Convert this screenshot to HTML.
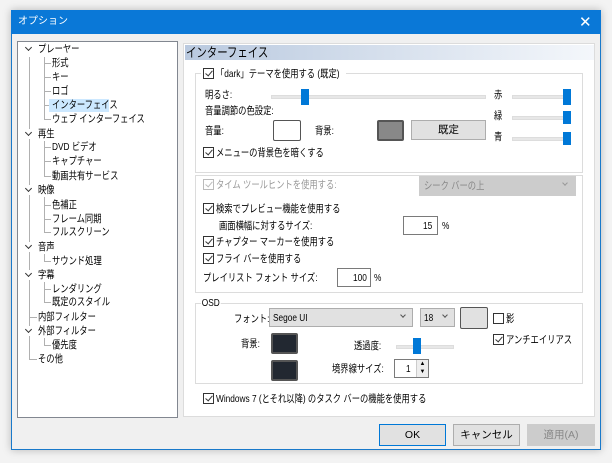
<!DOCTYPE html>
<html><head><meta charset="utf-8"><style>
*{margin:0;padding:0;box-sizing:border-box}
body{width:612px;height:463px;background:#f3f3f3;font-family:"Liberation Sans","Noto Sans CJK JP",sans-serif;font-size:10.5px;color:#000;position:relative;overflow:hidden}
.a{position:absolute;white-space:nowrap;line-height:12px;transform:scaleX(0.79);transform-origin:0 0}
.win{position:absolute;left:11px;top:10px;width:590px;height:440px;background:#f0f0f0;border:1px solid #1979ca;box-shadow:0 0 8px rgba(0,0,0,.25)}
.title{position:absolute;left:11px;top:10px;width:590px;height:24px;background:#0a78d7;color:#fff}
.cb{position:absolute;width:11px;height:11px;border:1px solid #333;background:#fff}
.cb.c::after{content:"";position:absolute;left:3px;top:0px;width:3px;height:6px;border:solid #333;border-width:0 1.3px 1.3px 0;transform:rotate(40deg)}
.cb.g{border-color:#bbb}.cb.g::after{border-color:#bbb}
.grp{position:absolute;border:1px solid #dcdcdc}
.trk{position:absolute;height:4px;background:#e7e7e7;border:1px solid #ddd}
.th{position:absolute;width:8px;background:#0078d7}
.box{position:absolute;border:1px solid #7a7a7a;background:#fff}
.btn{position:absolute;border:1px solid #adadad;background:#e1e1e1;text-align:center;line-height:20px}
.v{position:absolute;width:1px;background:#b0b0b0}
.h{position:absolute;height:1px;background:#b0b0b0}
.chev{position:absolute;width:5px;height:5px;border:solid #333;border-width:0 1.3px 1.3px 0;transform:rotate(45deg)}
</style></head><body>
<div class="win"></div>
<div class="title"><span class="a" style="left:7px;top:6px;color:#fff;transform:none;font-size:10px">オプション</span><span style="position:absolute;left:568px;top:3px;font-size:15px;color:#fff">✕</span></div>

<!-- tree -->
<div style="position:absolute;left:17px;top:41px;width:161px;height:377px;background:#fff;border:1px solid #828790"></div>
<div style="position:absolute;left:49px;top:99px;width:60px;height:13px;background:#cce8ff"></div>
<div class="v" style="left:29px;top:57px;height:302px"></div>
<div class="v" style="left:44px;top:57px;height:63px"></div>
<div class="v" style="left:44px;top:141px;height:36px"></div>
<div class="v" style="left:44px;top:197px;height:36px"></div>
<div class="v" style="left:44px;top:254px;height:8px"></div>
<div class="v" style="left:44px;top:282px;height:21px"></div>
<div class="v" style="left:44px;top:338px;height:8px"></div>
<div class="h" style="left:29px;top:317px;width:8px"></div>
<div class="h" style="left:29px;top:359px;width:8px"></div>
<div class="h" style="left:44px;top:63px;width:7px"></div>
<div class="h" style="left:44px;top:77px;width:7px"></div>
<div class="h" style="left:44px;top:91px;width:7px"></div>
<div class="h" style="left:44px;top:105px;width:5px"></div>
<div class="h" style="left:44px;top:119px;width:7px"></div>
<div class="h" style="left:44px;top:147px;width:7px"></div>
<div class="h" style="left:44px;top:161px;width:7px"></div>
<div class="h" style="left:44px;top:176px;width:7px"></div>
<div class="h" style="left:44px;top:205px;width:7px"></div>
<div class="h" style="left:44px;top:219px;width:7px"></div>
<div class="h" style="left:44px;top:232px;width:7px"></div>
<div class="h" style="left:44px;top:261px;width:7px"></div>
<div class="h" style="left:44px;top:289px;width:7px"></div>
<div class="h" style="left:44px;top:302px;width:7px"></div>
<div class="h" style="left:44px;top:345px;width:7px"></div>
<div style="position:absolute;left:23px;top:44px;width:12px;height:10px;background:#fff"></div>
<div class="chev" style="left:26px;top:45px"></div>
<div style="position:absolute;left:23px;top:129px;width:12px;height:10px;background:#fff"></div>
<div class="chev" style="left:26px;top:130px"></div>
<div style="position:absolute;left:23px;top:185px;width:12px;height:10px;background:#fff"></div>
<div class="chev" style="left:26px;top:186px"></div>
<div style="position:absolute;left:23px;top:242px;width:12px;height:10px;background:#fff"></div>
<div class="chev" style="left:26px;top:243px"></div>
<div style="position:absolute;left:23px;top:270px;width:12px;height:10px;background:#fff"></div>
<div class="chev" style="left:26px;top:271px"></div>
<div style="position:absolute;left:23px;top:326px;width:12px;height:10px;background:#fff"></div>
<div class="chev" style="left:26px;top:327px"></div>
<span class="a" style="left:38px;top:43px">プレーヤー</span>
<span class="a" style="left:52px;top:57px">形式</span>
<span class="a" style="left:52px;top:71px">キー</span>
<span class="a" style="left:52px;top:85px">ロゴ</span>
<span class="a" style="left:52px;top:99px">インターフェイス</span>
<span class="a" style="left:52px;top:113px">ウェブ インターフェイス</span>
<span class="a" style="left:38px;top:128px">再生</span>
<span class="a" style="left:52px;top:141px">DVD ビデオ</span>
<span class="a" style="left:52px;top:155px">キャプチャー</span>
<span class="a" style="left:52px;top:170px">動画共有サービス</span>
<span class="a" style="left:38px;top:184px">映像</span>
<span class="a" style="left:52px;top:199px">色補正</span>
<span class="a" style="left:52px;top:213px">フレーム同期</span>
<span class="a" style="left:52px;top:226px">フルスクリーン</span>
<span class="a" style="left:38px;top:241px">音声</span>
<span class="a" style="left:52px;top:255px">サウンド処理</span>
<span class="a" style="left:38px;top:269px">字幕</span>
<span class="a" style="left:52px;top:283px">レンダリング</span>
<span class="a" style="left:52px;top:296px">既定のスタイル</span>
<span class="a" style="left:38px;top:311px">内部フィルター</span>
<span class="a" style="left:38px;top:325px">外部フィルター</span>
<span class="a" style="left:52px;top:339px">優先度</span>
<span class="a" style="left:38px;top:353px">その他</span>

<!-- right panel -->
<div style="position:absolute;left:183px;top:43px;width:412px;height:374px;background:#fff;border:1px solid #dcdcdc"></div>
<div style="position:absolute;left:185px;top:45px;width:409px;height:15px;background:linear-gradient(90deg,#b9c9df,#f4f7fb)"></div>
<span class="a" style="left:186px;top:46px;font-size:13px;line-height:14px;transform:scaleX(0.8)">インターフェイス</span>

<div class="grp" style="left:195px;top:73px;width:388px;height:100px"></div>
<div style="position:absolute;left:201px;top:67px;width:145px;height:12px;background:#fff"></div>
<div class="cb c" style="left:203px;top:68px"></div><span class="a" style="left:216px;top:68px">「dark」テーマを使用する (既定)</span>
<span class="a" style="left:205px;top:89px">明るさ:</span>
<div class="trk" style="left:271px;top:95px;width:215px"></div><div class="th" style="left:301px;top:89px;height:16px"></div>
<span class="a" style="left:494px;top:89px">赤</span><div class="trk" style="left:512px;top:95px;width:58px"></div><div class="th" style="left:563px;top:89px;height:16px"></div>
<span class="a" style="left:494px;top:110px">緑</span><div class="trk" style="left:512px;top:116px;width:58px"></div><div class="th" style="left:563px;top:111px;height:13px"></div>
<span class="a" style="left:494px;top:131px">青</span><div class="trk" style="left:512px;top:137px;width:58px"></div><div class="th" style="left:563px;top:132px;height:13px"></div>
<span class="a" style="left:205px;top:105px">音量調節の色設定:</span>
<span class="a" style="left:205px;top:125px">音量:</span>
<div class="box" style="left:273px;top:120px;width:28px;height:21px;border-color:#555;border-radius:2px"></div>
<span class="a" style="left:315px;top:125px">背景:</span>
<div class="box" style="left:377px;top:120px;width:27px;height:21px;background:#888;border:2px solid #555;border-radius:2px"></div>
<div class="btn" style="left:411px;top:120px;width:75px;height:20px;line-height:18px">既定</div>
<div class="cb c" style="left:203px;top:147px"></div><span class="a" style="left:216px;top:147px">メニューの背景色を暗くする</span>

<div class="grp" style="left:195px;top:175px;width:388px;height:118px"></div>
<div class="cb c g" style="left:203px;top:179px"></div><span class="a" style="left:216px;top:179px;color:#999">タイム ツールヒントを使用する:</span>
<div style="position:absolute;left:419px;top:176px;width:157px;height:20px;background:#ccc;border:1px solid #ccc"></div>
<span class="a" style="left:424px;top:180px;color:#888">シーク バーの上</span><div class="chev" style="left:563px;top:181px;border-color:#999;width:4px;height:4px;border-width:0 1px 1px 0"></div>
<div class="cb c" style="left:203px;top:203px"></div><span class="a" style="left:216px;top:203px">検索でプレビュー機能を使用する</span>
<span class="a" style="left:219px;top:220px">画面横幅に対するサイズ:</span>
<div class="box" style="left:403px;top:216px;width:35px;height:19px"></div><span class="a" style="left:423px;top:220px">15</span><span class="a" style="left:442px;top:220px">%</span>
<div class="cb c" style="left:203px;top:236px"></div><span class="a" style="left:216px;top:236px">チャプター マーカーを使用する</span>
<div class="cb c" style="left:203px;top:253px"></div><span class="a" style="left:216px;top:253px">フライ バーを使用する</span>
<span class="a" style="left:203px;top:272px">プレイリスト フォント サイズ:</span>
<div class="box" style="left:337px;top:268px;width:34px;height:19px"></div><span class="a" style="left:353px;top:272px">100</span><span class="a" style="left:374px;top:272px">%</span>

<div class="grp" style="left:195px;top:303px;width:388px;height:81px"></div>
<span class="a" style="left:201px;top:297px;background:#fff;padding:0 1px">OSD</span>
<span class="a" style="left:234px;top:313px">フォント:</span>
<div style="position:absolute;left:269px;top:308px;width:144px;height:19px;background:#e1e1e1;border:1px solid #adadad"></div>
<span class="a" style="left:273px;top:312px">Segoe UI</span><div class="chev" style="left:401px;top:313px;width:4px;height:4px;border-width:0 1px 1px 0;border-color:#555"></div>
<div style="position:absolute;left:420px;top:308px;width:35px;height:19px;background:#e1e1e1;border:1px solid #adadad"></div>
<span class="a" style="left:424px;top:312px">18</span><div class="chev" style="left:443px;top:313px;width:4px;height:4px;border-width:0 1px 1px 0;border-color:#555"></div>
<div class="box" style="left:460px;top:307px;width:28px;height:22px;background:#e1e1e1;border:1px solid #555;border-radius:2px"></div>
<div class="cb" style="left:493px;top:313px"></div><span class="a" style="left:506px;top:313px">影</span>
<div class="cb c" style="left:493px;top:334px"></div><span class="a" style="left:506px;top:334px">アンチエイリアス</span>
<span class="a" style="left:241px;top:338px">背景:</span>
<div class="box" style="left:271px;top:333px;width:27px;height:21px;background:#222831;border:2px solid #555;border-radius:2px"></div>
<span class="a" style="left:354px;top:340px">透過度:</span>
<div class="trk" style="left:396px;top:345px;width:58px"></div><div class="th" style="left:413px;top:338px;height:16px"></div>
<div class="box" style="left:271px;top:360px;width:27px;height:21px;background:#222831;border:2px solid #555;border-radius:2px"></div>
<span class="a" style="left:332px;top:363px">境界線サイズ:</span>
<div class="box" style="left:394px;top:359px;width:35px;height:19px"></div><span class="a" style="left:406px;top:363px">1</span>
<div style="position:absolute;left:416px;top:360px;width:12px;height:17px;background:#eee;border-left:1px solid #ccc;font-size:6px;line-height:8px;text-align:center">▲<br>▼</div>
<div class="cb c" style="left:203px;top:393px"></div><span class="a" style="left:216px;top:393px">Windows 7 (とそれ以降) のタスク バーの機能を使用する</span>

<div class="btn" style="left:379px;top:424px;width:67px;height:22px;border:1px solid #0078d7">OK</div>
<div class="btn" style="left:453px;top:424px;width:67px;height:22px">キャンセル</div>
<div class="btn" style="left:527px;top:424px;width:68px;height:22px;border-color:#ccc;background:#ccc;color:#888">適用(A)</div>
</body></html>
